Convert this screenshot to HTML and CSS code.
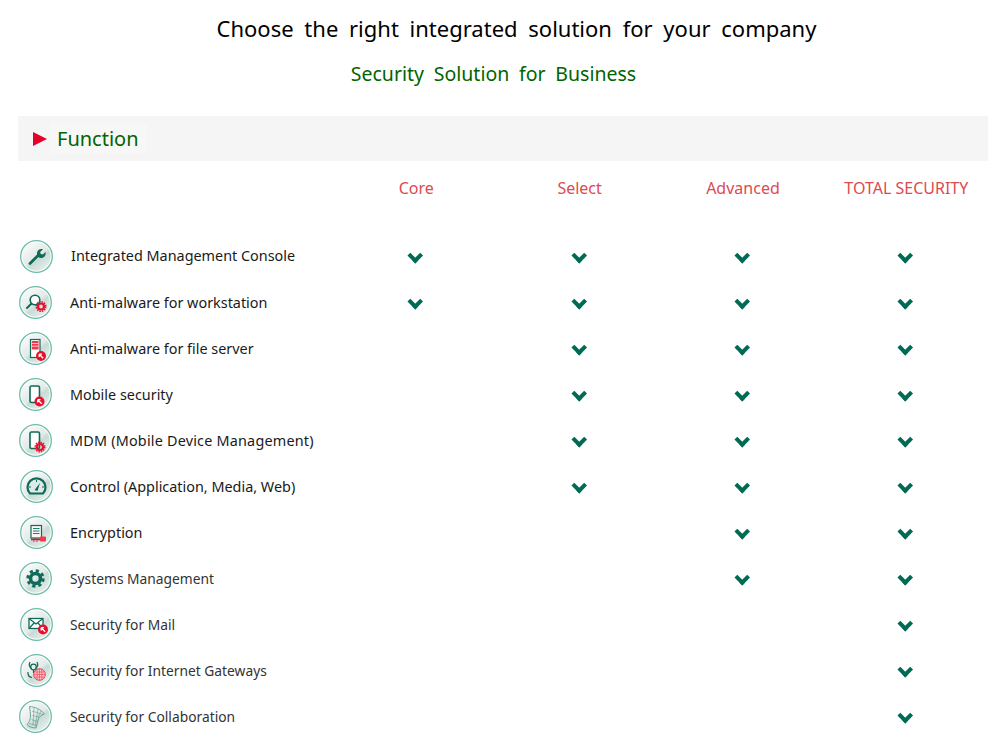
FILE: index.html
```html
<!DOCTYPE html>
<html lang="en">
<head>
<meta charset="utf-8">
<title>Security Solution for Business</title>
<link rel="stylesheet" href="styles.css">
</head>
<body>
<svg class="defs" width="0" height="0" aria-hidden="true">
<defs>
<linearGradient id="disc" x1="0.1" y1="0" x2="0.9" y2="1">
<stop offset="0" stop-color="#fbfcfc"/><stop offset="0.5" stop-color="#e3eae8"/><stop offset="0.6" stop-color="#c9dbd6"/><stop offset="1" stop-color="#edf2f0"/>
</linearGradient>
<g id="base"><circle cx="16.5" cy="16.5" r="15.8" fill="#fff" stroke="#6cbca9" stroke-width="1.3"/><circle cx="16.5" cy="16.5" r="14.2" fill="url(#disc)"/></g>
<g id="redgear"><circle cx="0" cy="0" r="3" fill="none" stroke="#e8102c" stroke-width="2.200"/><circle cx="0" cy="0" r="4.800" fill="none" stroke="#e8102c" stroke-width="1.500" stroke-dasharray="1.500 1"/></g>
<g id="redbadge"><circle cx="0" cy="0" r="5" fill="#e8102c"/><path d="M-1.800 -1.800h2.800M-1.800 -1.800v2.800M-1.800 -1.800L2.200 2.200" stroke="#fff" stroke-width="1.300" fill="none"/></g>
</defs>
</svg>
<main class="page">
<h1 class="title">Choose the right integrated solution for your company</h1>
<h2 class="subtitle">Security Solution for Business</h2>
<div class="banner"><span class="arrow"></span><span class="banner-text">Function</span></div>
<div class="matrix">
<div class="head-spacer"></div><div class="head">Core</div><div class="head">Select</div><div class="head">Advanced</div><div class="head">TOTAL SECURITY</div>

<div class="feature dark first"><svg class="icon nudge" viewBox="0 0 33 33"><use href="#base"/><path d="M10 23.500l8-8" stroke="#0e6b57" stroke-width="2.800" stroke-linecap="round"/><path d="M17 13c.3-2.800 3-4.500 6-3.700l-2.800 2.600.5 2.200 2.200.5 2.600-2.600c.7 3-1 5.600-3.800 6-1.500.2-2.500-.1-3.100-.7-1.200-.9-1.800-2.400-1.600-4.300z" fill="#0e6b57"/></svg><span>Integrated Management Console</span></div>
<div class="cell on"></div><div class="cell on"></div><div class="cell on"></div><div class="cell on"></div>

<div class="feature dark"><svg class="icon" viewBox="0 0 33 33"><use href="#base"/><circle cx="16" cy="14" r="4.800" fill="#fff" stroke="#0e6b57" stroke-width="1.600"/><path d="M12.500 17.500l-4.500 4.500" stroke="#0e6b57" stroke-width="2" stroke-linecap="round"/><use href="#redgear" x="22" y="20.500"/></svg><span>Anti-malware for workstation</span></div>
<div class="cell on"></div><div class="cell on"></div><div class="cell on"></div><div class="cell on"></div>

<div class="feature dark"><svg class="icon" viewBox="0 0 33 33"><use href="#base"/><rect x="11.500" y="7.500" width="9.500" height="18" fill="#fff" stroke="#0e6b57" stroke-width="1.200"/><rect x="12.800" y="9" width="6.800" height="8.500" fill="#ee3a4c"/><path d="M12.800 11.500h6.800M12.800 14.200h6.800" stroke="#fff" stroke-width=".7"/><use href="#redbadge" x="22" y="24"/></svg><span>Anti-malware for file server</span></div>
<div class="cell"></div><div class="cell on"></div><div class="cell on"></div><div class="cell on"></div>

<div class="feature dark"><svg class="icon" viewBox="0 0 33 33"><use href="#base"/><rect x="11" y="8" width="9.500" height="16.500" rx="1.600" fill="#fff" stroke="#0e6b57" stroke-width="1.600"/><use href="#redbadge" x="20.500" y="23.500"/></svg><span>Mobile security</span></div>
<div class="cell"></div><div class="cell on"></div><div class="cell on"></div><div class="cell on"></div>

<div class="feature dark mdm"><svg class="icon" viewBox="0 0 33 33"><use href="#base"/><rect x="11" y="8" width="9.500" height="16.500" rx="1.600" fill="#fff" stroke="#0e6b57" stroke-width="1.600"/><use href="#redgear" x="21" y="23"/></svg><span>MDM (Mobile Device Management)</span></div>
<div class="cell"></div><div class="cell on"></div><div class="cell on"></div><div class="cell on"></div>

<div class="feature dark"><svg class="icon nudge" viewBox="0 0 33 33"><use href="#base"/><path d="M10 23.500a9 9 0 1 1 13 0z" fill="#dfe9e7" stroke="#0e6b57" stroke-width="2.200"/><path d="M14.500 20l5.500-7-2.500 8z" fill="#0e6b57"/><path d="M9 17h2M16.500 10v2M24 17h-2" stroke="#0e6b57" stroke-width="1"/></svg><span>Control (Application, Media, Web)</span></div>
<div class="cell"></div><div class="cell on"></div><div class="cell on"></div><div class="cell on"></div>

<div class="feature dark"><svg class="icon nudge" viewBox="0 0 33 33"><use href="#base"/><rect x="11" y="9.500" width="10.500" height="12.500" fill="#f6f8f7" stroke="#0e6b57" stroke-width="1.200"/><path d="M13 12.500h6.500M13 15h6.500M13 17.500h6.500" stroke="#0e6b57" stroke-width=".9"/><path d="M11 23.500h10" stroke="#e8102c" stroke-width="1.600"/><rect x="20" y="20.500" width="6" height="5" rx="1" fill="#ee3a4c"/><path d="M14 24.500v1.500M17 24.500v1.500" stroke="#e8102c" stroke-width="1"/></svg><span>Encryption</span></div>
<div class="cell"></div><div class="cell"></div><div class="cell on"></div><div class="cell on"></div>

<div class="feature"><svg class="icon" viewBox="0 0 33 33"><use href="#base"/><circle cx="16.500" cy="16.500" r="5" fill="none" stroke="#0e6b57" stroke-width="3.600"/><circle cx="16.500" cy="16.500" r="7.800" fill="none" stroke="#0e6b57" stroke-width="2.800" stroke-dasharray="3.200 2.925"/></svg><span>Systems Management</span></div>
<div class="cell"></div><div class="cell"></div><div class="cell on"></div><div class="cell on"></div>

<div class="feature"><svg class="icon nudge" viewBox="0 0 33 33"><use href="#base"/><rect x="9" y="10.500" width="14" height="10" fill="#fff" stroke="#0e6b57" stroke-width="1.300"/><path d="M9 10.500l7 5.500 7-5.500M9 20.500l5-5.500M23 20.500l-5-5.500" fill="none" stroke="#0e6b57" stroke-width="1.200"/><use href="#redbadge" x="23" y="21.500"/></svg><span>Security for Mail</span></div>
<div class="cell"></div><div class="cell"></div><div class="cell"></div><div class="cell on"></div>

<div class="feature"><svg class="icon nudge" viewBox="0 0 33 33"><use href="#base"/><circle cx="13.500" cy="13" r="2.800" fill="none" stroke="#0e6b57" stroke-width="1.200"/><path d="M10 8c-1.500 3-.5 5 1.500 6.500M17 8c1.500 3 .5 5-1.500 6.500M8 18c-.5 3 1 5 4 5.500M13.500 16v3" fill="none" stroke="#0e6b57" stroke-width="1.200"/><circle cx="19.500" cy="20.500" r="5.800" fill="#f8c4c9" stroke="#ee3a4c" stroke-width="1"/><path d="M13.800 20.500h11.400M19.500 14.800v11.400M15 18h9M15 23h9M17.200 15.200v10.600M21.800 15.200v10.600" stroke="#ee3a4c" stroke-width=".6" fill="none"/></svg><span>Security for Internet Gateways</span></div>
<div class="cell"></div><div class="cell"></div><div class="cell"></div><div class="cell on"></div>

<div class="feature"><svg class="icon" viewBox="0 0 33 33"><use href="#base"/><path d="M10.500 6.500c5.500.5 11 2.500 15 7.500-3 1-5.500 2.500-6.500 6l-2 8c-3.500 0-6.500-1-9-3.500 2.500-2.500 3.500-5 3.500-8.500 0-3-.5-6-1-9.500z" fill="none" stroke="#5f9f8d" stroke-width=".9"/><path d="M13 11l11 3.500M13.500 15.500l6.500 1.500M12.500 19.500l6 2M10 23.500l8 2M15 7.500l-1 18M19 9l-3 18.500M22 11l-3 6.500" stroke="#5f9f8d" stroke-width=".6" fill="none"/></svg><span>Security for Collaboration</span></div>
<div class="cell"></div><div class="cell"></div><div class="cell"></div><div class="cell on"></div>
</div>
</main>
</body>
</html>
```
FILE: styles.css
```css
* { box-sizing: border-box; }
html, body { margin: 0; padding: 0; background: #fff; }
body { font-family: "Noto Sans", "Open Sans", "Liberation Sans", sans-serif; height: 754px; overflow: hidden; }
.defs { position: absolute; }
.page { padding: 0 14px 0 18px; }
.title {
  margin: 0; padding: 12px 0 0 27px; height: 58px;
  font-size: 22px; line-height: 32px; font-weight: 400; color: #000;
  text-align: center; word-spacing: 5px;
}
.subtitle {
  margin: 0; padding-right: 19px; height: 58px;
  font-size: 19.5px; line-height: 32px; font-weight: 400; color: #006400;
  text-align: center; word-spacing: 4.7px;
}
.banner {
  display: flex; align-items: center; height: 45px; padding-left: 15px;
  background: #f5f5f5;
}
.arrow {
  width: 0; height: 0; margin-right: 3px;
  border-left: 14px solid #e4002b; border-top: 7px solid transparent; border-bottom: 7px solid transparent;
}
.banner-text { font-size: 20px; line-height: 31px; color: #006400; background: #f7f7f7; padding: 0 8px 0 7px; }
.matrix {
  display: grid; grid-template-columns: 316.6px repeat(4, 163.35px);
  grid-template-rows: 72px repeat(11, 46.1px);
}
.head { text-align: center; font-size: 16px; line-height: 54px; color: #dd4a4f; white-space: nowrap; }
.feature { display: flex; align-items: center; gap: 18px; padding-left: 1px; font-size: 13.8px; color: #333; }
.feature.dark { font-size: 14.4px; color: #1a1a1a; }
.feature.first span { margin: -2px 0 0 1px; }
.feature.mdm span { letter-spacing: 0.2px; }
.icon { width: 33px; height: 33px; flex: none; }
.icon.nudge { margin: 0 -1px 0 1px; }
.cell { position: relative; }
.on::after {
  content: ""; position: absolute; left: 50%; top: 50%; width: 10.5px; height: 10.5px;
  box-sizing: border-box; margin: -6.5px 0 0 -6px;
  border-right: 4px solid #006b54; border-bottom: 4px solid #006b54;
  transform: rotate(45deg);
}
```
